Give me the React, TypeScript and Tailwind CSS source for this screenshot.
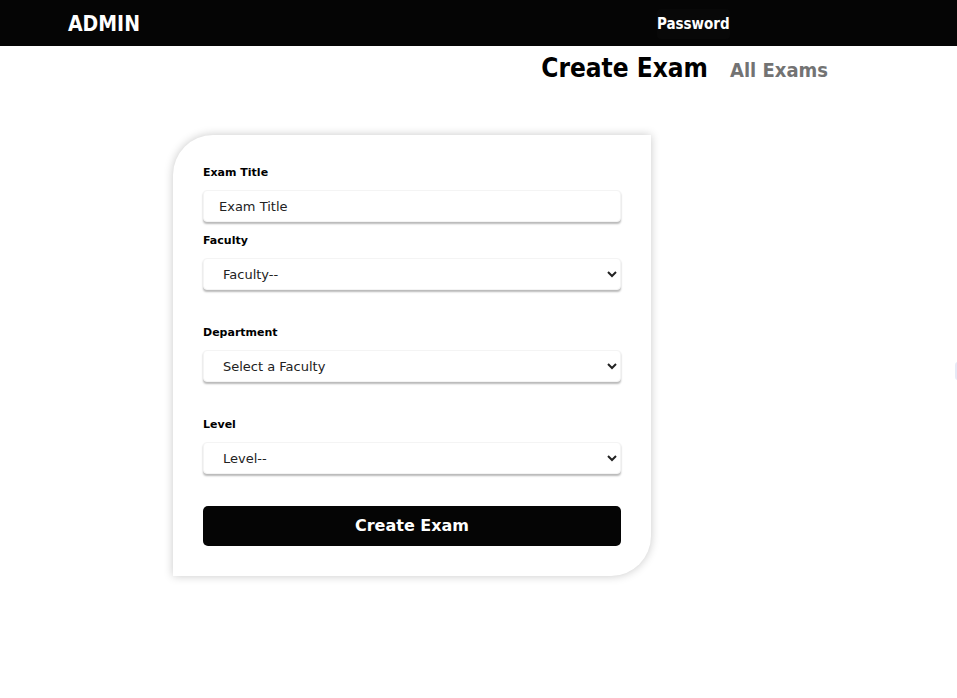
import { ReactNode } from 'react';

const condensed = { fontFamily: '"DejaVu Sans Condensed", "Liberation Sans Narrow", "DejaVu Sans", sans-serif' };

function Field({ label, children, className = '' }: { label: string; children: ReactNode; className?: string }) {
  return (
    <div className={`flex flex-col ${className}`}>
      <label className="text-[11px] font-bold text-black leading-[14px] mb-[10px]">{label}</label>
      {children}
    </div>
  );
}

const boxClass =
  'h-[32px] w-full rounded-[4px] bg-white border border-[#f4f4f4] shadow-[0_2px_2px_rgba(0,0,0,0.28)] pl-[15px] pr-[4px] text-[13px] text-[#222] placeholder:text-[#222] outline-none';

export default function App() {
  return (
    <div className="min-h-screen bg-white relative overflow-hidden" style={{ fontFamily: '"DejaVu Sans", Verdana, sans-serif' }}>
      <header className="h-[46px] bg-[#050505] flex items-center">
        <div className="pl-[68px] mt-[3px] text-white text-[21px] font-bold" style={condensed}>
          ADMIN
        </div>
        <div className="ml-[517px] mt-[1px] h-[30px] rounded-[4px] bg-[#080808] flex items-center pt-[1px] text-white text-[15px] font-bold" style={condensed}>
          Password
        </div>
      </header>

      <div className="flex justify-end items-baseline gap-[22px] pr-[129px] pt-[3px]" style={condensed}>
        <h1 className="text-[26px] font-bold text-black">Create Exam</h1>
        <span className="text-[20px] font-bold text-[#737373]">All Exams</span>
      </div>

      <div className="ml-[173px] mt-[47px] w-[478px] bg-white rounded-tl-[40px] rounded-br-[40px] shadow-[0_0_10px_rgba(0,0,0,0.22)] px-[30px] pt-[31px] pb-[30px]">
        <Field label="Exam Title">
          <input className={boxClass} placeholder="Exam Title" defaultValue="" />
        </Field>
        <Field label="Faculty" className="mt-[12px]">
          <select className={boxClass} defaultValue="">
            <option value="">Faculty--</option>
          </select>
        </Field>
        <Field label="Department" className="mt-[36px]">
          <select className={boxClass} defaultValue="">
            <option value="">Select a Faculty</option>
          </select>
        </Field>
        <Field label="Level" className="mt-[36px]">
          <select className={boxClass} defaultValue="">
            <option value="">Level--</option>
          </select>
        </Field>
        <button className="mt-[32px] w-full h-[40px] rounded-[5px] bg-[#050505] text-white text-[16px] font-bold">
          Create Exam
        </button>
      </div>

      <div className="absolute left-[955px] top-[362px] w-[6px] h-[18px] rounded-full border-l-2 border-[#e6eaf6]" />
    </div>
  );
}
